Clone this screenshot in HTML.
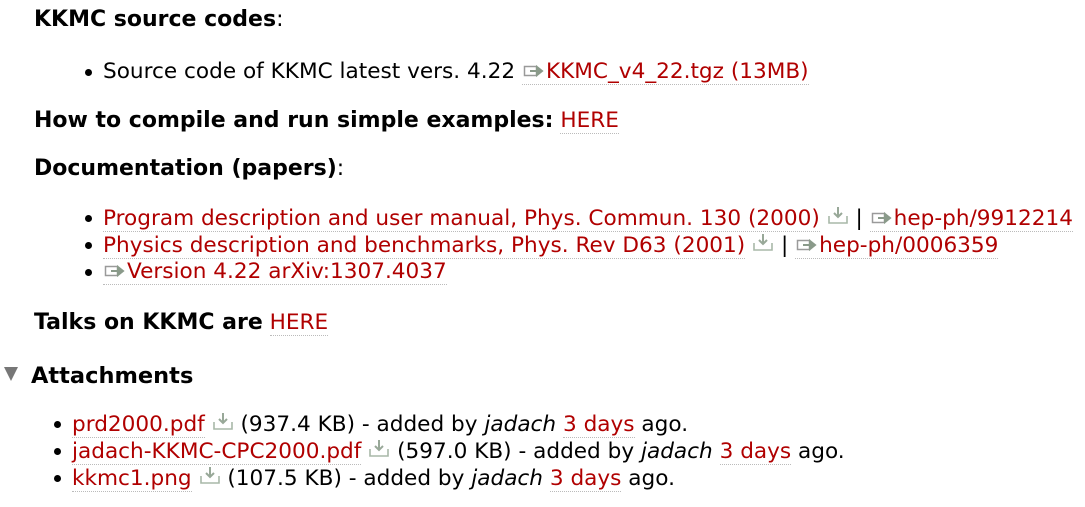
<!DOCTYPE html>
<html><head><meta charset="utf-8"><style>
body{margin:0;width:1085px;height:507px;background:#fff;font-family:"DejaVu Sans","Liberation Sans",sans-serif;font-size:21.6px;color:#000;position:relative;overflow:hidden}
.l{position:absolute;white-space:nowrap;line-height:26px}
b{font-weight:bold}
.h{font-size:22px}
a{color:#b00000;text-decoration:none;border-bottom:1px dotted #bbb}
.bul{position:absolute;left:-18px;top:10px;width:7px;height:7px;border-radius:50%;background:#000}
.ext,.dl{display:inline-block;vertical-align:baseline}
</style></head><body>
<svg width="0" height="0" style="position:absolute"><defs>
<symbol id="ext" viewBox="0 0 22 14"><rect x="1.5" y="2.5" width="12" height="9" fill="none" stroke="#9a9a9a" stroke-width="1.5"/><path d="M7 7h9M14 3l5 4-5 4z" stroke="#8a9a8a" stroke-width="2" fill="#8a9a8a"/></symbol>
<symbol id="dl" viewBox="0 0 22 20"><path d="M2 11v7h18v-7" fill="none" stroke="#a8b8a8" stroke-width="1.6"/><path d="M11 2v10M7 8l4 4 4-4" fill="none" stroke="#98a898" stroke-width="2"/></symbol>
</defs></svg>

<div class="l h" style="left:34px;top:7px"><b>KKMC source codes</b>:</div>
<div class="l" style="left:103px;top:59px"><span class="bul"></span>Source code of KKMC latest vers. 4.22 <a><svg class="ext" width="24" height="14"><use href="#ext"/></svg>KKMC_v4_22.tgz (13MB)</a></div>
<div class="l" style="left:34px;top:108px"><b class="h">How to compile and run simple examples:</b> <a>HERE</a></div>
<div class="l h" style="left:34px;top:156px"><b>Documentation (papers)</b>:</div>
<div class="l" style="left:103px;top:205px"><span class="bul"></span><a>Program description and user manual, Phys. Commun. 130 (2000)</a> <svg class="dl" width="22" height="20"><use href="#dl"/></svg> | <a><svg class="ext" width="24" height="14"><use href="#ext"/></svg>hep-ph/9912214</a></div>
<div class="l" style="left:103px;top:232px"><span class="bul"></span><a>Physics description and benchmarks, Phys. Rev D63 (2001)</a> <svg class="dl" width="22" height="20"><use href="#dl"/></svg> | <a><svg class="ext" width="24" height="14"><use href="#ext"/></svg>hep-ph/0006359</a></div>
<div class="l" style="left:103px;top:259px"><span class="bul"></span><a><svg class="ext" width="24" height="14"><use href="#ext"/></svg>Version 4.22 arXiv:1307.4037</a></div>
<div class="l" style="left:34px;top:310px"><b class="h">Talks on KKMC are</b> <a>HERE</a></div>
<svg style="position:absolute;left:3px;top:366px" width="16" height="16"><path d="M1 1h14L8 15z" fill="#777"/></svg>
<div class="l" style="left:31px;top:363px;font-size:22.5px"><b>Attachments</b></div>
<div class="l" style="left:72px;top:411px"><span class="bul"></span><a>prd2000.pdf</a> <svg class="dl" width="22" height="20"><use href="#dl"/></svg> (937.4 KB) - added by <i>jadach</i> <a>3 days</a> ago.</div>
<div class="l" style="left:72px;top:438px"><span class="bul"></span><a>jadach-KKMC-CPC2000.pdf</a> <svg class="dl" width="22" height="20"><use href="#dl"/></svg> (597.0 KB) - added by <i>jadach</i> <a>3 days</a> ago.</div>
<div class="l" style="left:72px;top:465px"><span class="bul"></span><a>kkmc1.png</a> <svg class="dl" width="22" height="20"><use href="#dl"/></svg> (107.5 KB) - added by <i>jadach</i> <a>3 days</a> ago.</div>
</body></html>
